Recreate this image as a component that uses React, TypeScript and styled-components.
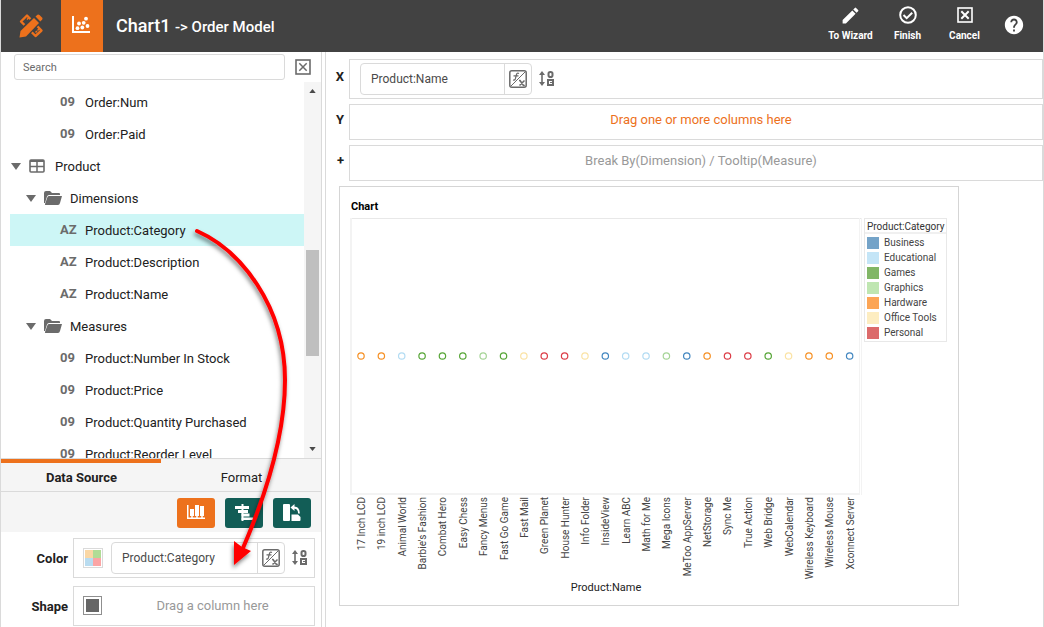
import React from "react";
import styled, { createGlobalStyle } from "styled-components";
import { MdEdit, MdHelp } from "react-icons/md";

const ORANGE = "#ed711c";
const TEAL = "#125d56";
const LINE = "#dadada";
const ICON = "#6b6b6b";

const GlobalStyle = createGlobalStyle`
  * { box-sizing: border-box; }
  body {
    margin: 0;
    background: #fff;
    color: #212121;
    font: 13px/16px Roboto, "Liberation Sans", sans-serif;
  }
  button, input { font: inherit; color: inherit; }
  button { padding: 0; border: 0; background: none; cursor: pointer; }
  svg { display: block; flex: none; }
`;

const Shell = styled.div`
  position: relative;
  display: flex;
  flex-direction: column;
  height: 100vh;
  border: solid ${LINE};
  border-width: 0 1px;
  overflow: hidden;
`;

/* ---------- header ---------- */

const Header = styled.header`
  display: flex;
  align-items: center;
  flex: none;
  height: 52px;
  background: #424242;
  color: #fff;
`;

const Logo = styled.a`
  display: flex;
  align-items: center;
  justify-content: center;
  width: 60px;
  height: 100%;
  color: ${ORANGE};
`;

const ChartTab = styled.button`
  display: flex;
  align-items: center;
  justify-content: center;
  width: 42px;
  height: 100%;
  background: ${ORANGE};
`;

const Title = styled.h1`
  flex: 1;
  margin: 0 0 0 13px;
  font-size: 18px;
  line-height: 24px;
  font-weight: 500;
  white-space: nowrap;
`;

const TitleModel = styled.span`
  font-size: 15px;
`;

const HeaderActions = styled.nav`
  display: flex;
  align-items: center;
  padding: 0 18px 3px 0;
`;

const HeaderAction = styled.button`
  display: flex;
  flex-direction: column;
  align-items: center;
  gap: 5px;
  width: 57px;
  font-size: 10px;
  line-height: 14px;
  font-weight: 700;
  white-space: nowrap;
`;

const HeaderGlyph = styled.span`
  display: flex;
  align-items: center;
  height: 18px;
`;

const HelpButton = styled.button`
  margin-left: 10px;
`;

/* ---------- left pane ---------- */

const Body = styled.div`
  display: flex;
  flex: 1;
  min-height: 0;
  gap: 3px;
`;

const Sidebar = styled.aside`
  display: flex;
  flex-direction: column;
  flex: none;
  width: 321px;
  border-right: 1px solid ${LINE};
`;

const SearchBar = styled.div`
  display: flex;
  align-items: center;
  gap: 10px;
  height: 30px;
  padding: 0 10px 0 13px;
`;

const SearchInput = styled.input`
  flex: 1;
  min-width: 0;
  height: 26px;
  padding: 0 8px;
  border: 1px solid ${LINE};
  border-radius: 3px;
  font-size: 11px;
  outline: 0;
  &::placeholder { color: #6b6b6b; opacity: 1; }
`;

const TreeArea = styled.div`
  display: flex;
  flex: 1;
  min-height: 0;
`;

const Tree = styled.ul`
  flex: 1;
  margin: 0;
  padding: 4px 0 0 9px;
  list-style: none;
  overflow: hidden;
`;

const TreeRow = styled.li<{ $depth: number; $selected?: boolean }>`
  display: flex;
  align-items: center;
  height: 32px;
  padding-left: ${(p) => 1 + p.$depth * 15}px;
  background: ${(p) => (p.$selected ? "#cdf6f6" : "transparent")};
  white-space: nowrap;
`;

const Toggle = styled.button`
  width: 10px;
  margin-right: 8px;
`;

const NodeIcon = styled.span`
  width: 26px;
`;

const TypeMark = styled.span`
  width: 25px;
  margin-left: 19px;
  color: ${ICON};
  font: bold 13px/16px "Liberation Sans Narrow", Roboto, sans-serif;
`;

const NodeText = styled.span`
  padding-top: 1px;
`;

const Scrollbar = styled.div`
  display: flex;
  flex-direction: column;
  align-items: center;
  width: 17px;
  padding: 7px 0;
  background: #f5f5f5;
`;

const ScrollTrack = styled.div`
  display: flex;
  flex-direction: column;
  flex: 1;
  margin: 4px 0;
`;

const ScrollSpace = styled.div<{ $grow: number }>`
  flex: ${(p) => p.$grow} 0 0;
`;

const ScrollThumb = styled.div`
  flex: 106 0 0;
  width: 13px;
  background: #bfbfbf;
`;

const Tabs = styled.div`
  display: flex;
  flex: none;
  border: solid ${LINE};
  border-width: 1px 0;
  background: #f5f5f5;
`;

const Tab = styled.button<{ $active?: boolean }>`
  flex: 1;
  height: 32px;
  padding: 2px 0 0 1px;
  border-top: 4px solid ${(p) => (p.$active ? ORANGE : "transparent")};
  font-weight: ${(p) => (p.$active ? 700 : 400)};
`;

const Tools = styled.div`
  display: flex;
  flex: none;
  justify-content: flex-end;
  gap: 10px;
  padding: 6px 10px 4px;
  background: #f5f5f5;
`;

const ToolButton = styled.button<{ $active?: boolean }>`
  display: flex;
  align-items: center;
  justify-content: center;
  width: 38px;
  height: 30px;
  border-radius: 3px;
  background: ${(p) => (p.$active ? ORANGE : TEAL)};
`;

const Bindings = styled.div`
  display: grid;
  flex: none;
  grid-template-columns: 67px 1fr;
  column-gap: 5px;
  row-gap: 8px;
  padding: 6px 6px 1px 0;
`;

const BindingLabel = styled.span`
  align-self: center;
  padding-top: 2px;
  text-align: right;
  font-weight: 700;
`;

const BindingBox = styled.div`
  display: flex;
  align-items: center;
  height: 40px;
  padding-left: 9px;
  border: 1px solid ${LINE};
`;

const Hint = styled.span<{ $accent?: boolean }>`
  flex: 1;
  text-align: center;
  color: ${(p) => (p.$accent ? ORANGE : "#999")};
`;

const Field = styled.div<{ $width: number }>`
  display: flex;
  width: ${(p) => p.$width}px;
  height: 32px;
  border: 1px solid ${LINE};
  border-radius: 4px;
`;

const FieldName = styled.span`
  flex: 1;
  padding: 7px 0 7px 10px;
  color: #4a4a4a;
  font-size: 12px;
`;

const FieldEdit = styled.button`
  display: flex;
  align-items: center;
  justify-content: center;
  width: 27px;
  border-left: 1px solid ${LINE};
`;

const SwatchButton = styled.button`
  margin-right: 8px;
`;

const SortButton = styled.button`
  margin-left: 7px;
`;

/* ---------- right pane ---------- */

const Main = styled.main`
  flex: 1;
  min-width: 0;
  padding-top: 7px;
  border-left: 1px solid ${LINE};
`;

const Shelf = styled.div`
  display: flex;
  align-items: center;
  margin-bottom: 5px;
`;

const ShelfLabel = styled.span`
  width: 23px;
  padding: 0 5px 4px 0;
  text-align: right;
  font-weight: 700;
`;

const ShelfBox = styled.div<{ $tall?: boolean }>`
  display: flex;
  align-items: center;
  flex: 1;
  height: ${(p) => (p.$tall ? 40 : 36)}px;
  padding: ${(p) => (p.$tall ? "0 10px" : "0 0 4px 10px")};
  border: 1px solid ${LINE};
`;

const ChartCard = styled.section`
  width: 620px;
  max-width: 100%;
  height: 420px;
  margin-left: 13px;
  padding: 12px 10px 0;
  border: 1px solid #d5d5d5;
`;

const ChartTitle = styled.h2`
  margin: 0 0 3px 1px;
  color: #000;
  font-size: 11px;
  line-height: 16px;
  font-weight: 700;
`;

const ChartContent = styled.div`
  display: flex;
  align-items: flex-start;
`;

const Legend = styled.div`
  width: 83px;
  border: 1px solid #e8e8e8;
  color: #444;
  font-size: 10px;
  line-height: 15px;
`;

const LegendTitle = styled.div`
  height: 15px;
  padding-left: 2px;
  border-bottom: 2px solid #f0f0f0;
  color: #333;
  white-space: nowrap;
`;

const LegendList = styled.ul`
  margin: 0;
  padding: 1px 0 1px 2px;
  list-style: none;
`;

const LegendItem = styled.li`
  display: flex;
  align-items: center;
  gap: 5px;
`;

const LegendSwatch = styled.span<{ $color: string }>`
  width: 12px;
  height: 12px;
  background: ${(p) => p.$color};
`;

const Annotation = styled.svg`
  position: absolute;
  top: 0;
  left: -1px;
  pointer-events: none;
`;

/* ---------- icons ---------- */

const LogoIcon = () => (
  <svg width="26" height="26" viewBox="0 0 26 26" fill="none" stroke="currentColor">
    <path d="M9 2.500 23.500 17.500 17.500 23 3 8.500z" strokeWidth="2.400" strokeLinejoin="round" />
    <path d="m11 4.500-2 2M21.500 15.500l-2 2M19 18l-1.500 1.500" strokeWidth="1.500" />
    <path d="M1.500 24.500 3 17 17 3.500l5.500 5L8.500 23z" fill="#424242" stroke="#424242" strokeWidth="2.500" />
    <path d="M1.500 24.500 2.500 18 16 5l5 5L8 23.500z" fill="currentColor" stroke="none" />
    <path d="m17.500 3.500 2-1.700q1-.6 2 .3l2.500 2.500q1 1 .2 2l-1.900 1.900z" fill="currentColor" stroke="none" />
  </svg>
);

const ScatterIcon = () => (
  <svg width="20" height="20" viewBox="0 0 20 20" fill="#fff">
    <path d="M0 0h2v15h16v2H0z" />
    <circle cx="5.500" cy="12.200" r="1.900" />
    <circle cx="7" cy="7.500" r="1.900" />
    <circle cx="10.300" cy="11.500" r="1.900" />
    <circle cx="11.700" cy="6.800" r="1.900" />
    <circle cx="14" cy="2.700" r="1.900" />
    <circle cx="15.500" cy="10" r="1.900" />
  </svg>
);

const CheckIcon = () => (
  <svg width="18" height="18" viewBox="0 0 18 18" fill="none" stroke="#fff" strokeWidth="2">
    <circle cx="9" cy="9" r="7.800" />
    <path d="m4.500 9 3.200 3.200 5.500-5.500" />
  </svg>
);

const BoxedCross = ({ color, weight }: { color: string; weight: number }) => (
  <svg width="16" height="16" viewBox="0 0 16 16" fill="none" stroke={color}>
    <rect x="1" y="1" width="14" height="14" strokeWidth="1.600" />
    <path d="m4.300 4.300 7.400 7.400M11.700 4.300l-7.400 7.400" strokeWidth={weight} />
  </svg>
);

const Caret = () => (
  <svg width="10" height="7" viewBox="0 0 10 7" fill={ICON}>
    <path d="M0 0h10L5 7z" />
  </svg>
);

const TableIcon = () => (
  <svg width="16" height="14" viewBox="0 0 16 14" fill="none" stroke={ICON}>
    <rect x="1" y="1" width="14" height="12" rx="1" strokeWidth="1.600" />
    <path d="M1 2h14" strokeWidth="2" />
    <path d="M8 2v11M1 7.500h14" strokeWidth="1.500" />
  </svg>
);

const FolderIcon = () => (
  <svg width="18" height="14" viewBox="0 0 18 14" fill={ICON}>
    <path d="M0 12V2Q0 0 2 0h4l2 2h7q1 0 1 1v1H5Q3.500 4 3 5.500L1 12z" />
    <path d="M5 5h13l-2 7q-.5 2-2 2H1.500q-.8 0-.5-1L3.500 6Q4 5 5 5z" />
  </svg>
);

const FormulaIcon = () => (
  <svg width="18" height="18" viewBox="0 0 18 18" fill="none" stroke={ICON}>
    <rect x=".8" y=".8" width="16.400" height="16.400" rx="2" strokeWidth="1.500" />
    <path d="M2 16 16 2" />
    <path d="M10 3.500q-2-1-2.500 1L6.300 9q-.5 1.500-2.300 1M4.500 5.800h5" strokeWidth="1.200" />
    <path d="m11 10.500 3.500 5M15.500 10.500l-5 5M10 10.500h1.500M14 15.500h1.800" strokeWidth="1.500" />
  </svg>
);

const SortIcon = () => (
  <svg width="15" height="16" viewBox="0 0 15 16" fill="none" stroke={ICON}>
    <path d="M3 3v9" strokeWidth="1.600" />
    <path d="M0 4 3 0l3 4zM0 11l3 4 3-4z" fill={ICON} stroke="none" />
    <rect x="9.500" y="1" width="4" height="5" rx="1.800" strokeWidth="2" />
    <rect x="9" y="9" width="5" height="5" strokeWidth="2" />
    <path d="M11 11.500h3" />
  </svg>
);

const BarsIcon = () => (
  <svg width="20" height="18" viewBox="0 0 20 18" fill="#fff">
    <path d="M1 1h1.500v12.500H19V15H1z" />
    <rect x="4" y="5" width="4" height="7" />
    <rect x="9" y="1" width="4" height="11" />
    <rect x="14" y="2" width="4" height="10" />
    <path d="M6 12v3M11 12v3M16 12v3" stroke="#fff" strokeWidth="1.500" />
  </svg>
);

const AlignIcon = () => (
  <svg width="20" height="18" viewBox="0 0 20 18" fill="#fff">
    <path d="M7.500 0h2v17h-2z" />
    <path d="M1 2h14v3H1zM4 6h10v3H4zM7.500 9.500h8v3h-8zM7.500 13.500H19v2.500H7.500z" />
  </svg>
);

const SwapIcon = () => (
  <svg width="20" height="18" viewBox="0 0 20 18" fill="#fff">
    <rect x="1" y="0" width="7" height="17" rx="1" />
    <path d="M9.500 10.500H16l2.500 2.500v3q0 1-1 1h-8z" />
    <path d="M8.500 3.500 12.500 0v7z" />
    <path d="M11.500 3.500q5.500 0 5.500 6" fill="none" stroke="#fff" strokeWidth="1.800" />
  </svg>
);

const PaletteIcon = () => (
  <svg width="20" height="20" viewBox="0 0 20 20">
    <rect x=".5" y=".5" width="19" height="19" fill="#fff" stroke={LINE} />
    <path d="M2 2h8v8H2z" fill="#fad7a5" />
    <path d="M10 2h8v8h-8z" fill="#b0dc96" />
    <path d="M2 10h8v8H2z" fill="#b9dcf0" />
    <path d="M10 10h8v8h-8z" fill="#fba5a5" />
  </svg>
);

const ShapeIcon = () => (
  <svg width="20" height="20" viewBox="0 0 20 20">
    <rect x=".5" y=".5" width="18" height="18" fill="#fff" stroke="#8f8f8f" />
    <path d="M3 3h13v13H3z" fill="#666" />
  </svg>
);

/* ---------- data ---------- */

type Node = { text: string; kind: "09" | "AZ" | "table" | "folder"; selected?: boolean };

const NODES: Node[] = [
  { text: "Order:Num", kind: "09" },
  { text: "Order:Paid", kind: "09" },
  { text: "Product", kind: "table" },
  { text: "Dimensions", kind: "folder" },
  { text: "Product:Category", kind: "AZ", selected: true },
  { text: "Product:Description", kind: "AZ" },
  { text: "Product:Name", kind: "AZ" },
  { text: "Measures", kind: "folder" },
  { text: "Product:Number In Stock", kind: "09" },
  { text: "Product:Price", kind: "09" },
  { text: "Product:Quantity Purchased", kind: "09" },
  { text: "Product:Reorder Level", kind: "09" },
];

const DEPTH = { table: 0, folder: 1, "09": 2, AZ: 2 };

const CATEGORIES = {
  Business: ["#74a3c8", "#4186c0"],
  Educational: ["#c4e5f7", "#b3dcf3"],
  Games: ["#81b666", "#56a536"],
  Graphics: ["#bfe6b1", "#a5d496"],
  Hardware: ["#fca555", "#f68f22"],
  "Office Tools": ["#fdedc1", "#fbe3a5"],
  Personal: ["#dc6a6a", "#dc3c46"],
};

type Category = keyof typeof CATEGORIES;

const PRODUCTS: [string, Category][] = [
  ["17 Inch LCD", "Hardware"],
  ["19 inch LCD", "Hardware"],
  ["Animal World", "Educational"],
  ["Barbie's Fashion", "Games"],
  ["Combat Hero", "Games"],
  ["Easy Chess", "Games"],
  ["Fancy Menus", "Graphics"],
  ["Fast Go Game", "Games"],
  ["Fast Mail", "Office Tools"],
  ["Green Planet", "Personal"],
  ["House Hunter", "Personal"],
  ["Info Folder", "Office Tools"],
  ["InsideView", "Business"],
  ["Learn ABC", "Educational"],
  ["Math for Me", "Educational"],
  ["Mega Icons", "Graphics"],
  ["MeToo AppServer", "Business"],
  ["NetStorage", "Hardware"],
  ["Sync Me", "Personal"],
  ["True Action", "Personal"],
  ["Web Bridge", "Games"],
  ["WebCalendar", "Office Tools"],
  ["Wireless Keyboard", "Hardware"],
  ["Wireless Mouse", "Hardware"],
  ["Xconnect Server", "Business"],
];

/* ---------- parts ---------- */

const TreeItem = ({ node }: { node: Node }) => {
  const leaf = node.kind === "09" || node.kind === "AZ";
  return (
    <TreeRow $depth={DEPTH[node.kind]} $selected={node.selected}>
      {leaf ? (
        <TypeMark>{node.kind}</TypeMark>
      ) : (
        <>
          <Toggle aria-label={`Collapse ${node.text}`}>
            <Caret />
          </Toggle>
          <NodeIcon>{node.kind === "table" ? <TableIcon /> : <FolderIcon />}</NodeIcon>
        </>
      )}
      <NodeText>{node.text}</NodeText>
    </TreeRow>
  );
};

const BoundField = ({ name, width }: { name: string; width: number }) => (
  <>
    <Field $width={width}>
      <FieldName>{name}</FieldName>
      <FieldEdit aria-label={`Edit ${name}`}>
        <FormulaIcon />
      </FieldEdit>
    </Field>
    <SortButton aria-label={`Sort ${name}`}>
      <SortIcon />
    </SortButton>
  </>
);

const PlotArea = () => {
  const step = 509 / PRODUCTS.length;
  return (
    <svg
      width="514"
      height="380"
      viewBox="0 0 514 380"
      fontFamily="Roboto, sans-serif"
      fontSize="10"
    >
      <path d="M0 .5h511" stroke="#e8e8e8" />
      <path d="M1 0v277M0 276h510" stroke="#f3f3f3" strokeWidth="2" fill="none" />
      <path d="M509.500 0v277M511.500 0v277" stroke="#f3f3f3" />
      {PRODUCTS.map(([name, category], i) => {
        const x = 11 + i * step;
        return (
          <g key={name}>
            <circle
              cx={x}
              cy="138"
              r="3.200"
              fill="none"
              stroke={CATEGORIES[category][1]}
              strokeWidth="1.200"
            />
            <text
              transform={`translate(${Math.round(x) + 4} 279) rotate(-90)`}
              textAnchor="end"
              fill="#444"
            >
              {name}
            </text>
          </g>
        );
      })}
      <text x="256" y="373" textAnchor="middle" fontSize="11" fill="#222">
        Product:Name
      </text>
    </svg>
  );
};

const DragArrow = () => (
  <Annotation width="330" height="600" viewBox="0 0 330 600" aria-hidden="true">
    <defs>
      <filter id="arrow-shadow" x="-20%" y="-20%" width="140%" height="140%">
        <feDropShadow dx="-1" dy="3" stdDeviation="2" floodColor="#000" floodOpacity="0.5" />
      </filter>
    </defs>
    <g filter="url(#arrow-shadow)">
      <path
        d="M197 231C240 250 285 305 285 380C285 430 268 490 243 548"
        fill="none"
        stroke="#f00"
        strokeWidth="4"
        strokeLinecap="round"
      />
      <path d="M234 565V541l8 6 9 4z" fill="#f00" />
    </g>
  </Annotation>
);

export default function App() {
  return (
    <>
      <GlobalStyle />
      <Shell>
        <Header>
          <Logo href="#" aria-label="Home">
            <LogoIcon />
          </Logo>
          <ChartTab aria-label="Chart editor">
            <ScatterIcon />
          </ChartTab>
          <Title>
            Chart1 <TitleModel>-&gt; Order Model</TitleModel>
          </Title>
          <HeaderActions>
            <HeaderAction>
              <HeaderGlyph>
                <MdEdit size={21} />
              </HeaderGlyph>
              To Wizard
            </HeaderAction>
            <HeaderAction>
              <HeaderGlyph>
                <CheckIcon />
              </HeaderGlyph>
              Finish
            </HeaderAction>
            <HeaderAction>
              <HeaderGlyph>
                <BoxedCross color="#fff" weight={2} />
              </HeaderGlyph>
              Cancel
            </HeaderAction>
            <HelpButton aria-label="Help">
              <MdHelp size={22} />
            </HelpButton>
          </HeaderActions>
        </Header>

        <Body>
          <Sidebar>
            <SearchBar>
              <SearchInput type="search" placeholder="Search" aria-label="Search" />
              <button aria-label="Clear search">
                <BoxedCross color={ICON} weight={1.5} />
              </button>
            </SearchBar>
            <TreeArea>
              <Tree>
                {NODES.map((node) => (
                  <TreeItem key={node.text} node={node} />
                ))}
              </Tree>
              <Scrollbar>
                <svg width="7" height="4" viewBox="0 0 8 5" fill="#4a4a4a">
                  <path d="M0 5h8L4 0z" />
                </svg>
                <ScrollTrack>
                  <ScrollSpace $grow={153} />
                  <ScrollThumb />
                  <ScrollSpace $grow={87} />
                </ScrollTrack>
                <svg width="7" height="4" viewBox="0 0 8 5" fill="#4a4a4a">
                  <path d="M0 0h8L4 5z" />
                </svg>
              </Scrollbar>
            </TreeArea>
            <Tabs role="tablist">
              <Tab role="tab" aria-selected="true" $active>
                Data Source
              </Tab>
              <Tab role="tab" aria-selected="false">
                Format
              </Tab>
            </Tabs>
            <Tools>
              <ToolButton aria-label="Chart type" $active>
                <BarsIcon />
              </ToolButton>
              <ToolButton aria-label="Chart style">
                <AlignIcon />
              </ToolButton>
              <ToolButton aria-label="Swap axes">
                <SwapIcon />
              </ToolButton>
            </Tools>
            <Bindings>
              <BindingLabel>Color</BindingLabel>
              <BindingBox>
                <SwatchButton aria-label="Choose colors">
                  <PaletteIcon />
                </SwatchButton>
                <BoundField name="Product:Category" width={174} />
              </BindingBox>
              <BindingLabel>Shape</BindingLabel>
              <BindingBox>
                <SwatchButton aria-label="Choose shape">
                  <ShapeIcon />
                </SwatchButton>
                <Hint>Drag a column here</Hint>
              </BindingBox>
            </Bindings>
          </Sidebar>

          <Main>
            <Shelf>
              <ShelfLabel>X</ShelfLabel>
              <ShelfBox $tall>
                <BoundField name="Product:Name" width={172} />
              </ShelfBox>
            </Shelf>
            <Shelf>
              <ShelfLabel>Y</ShelfLabel>
              <ShelfBox>
                <Hint $accent>Drag one or more columns here</Hint>
              </ShelfBox>
            </Shelf>
            <Shelf>
              <ShelfLabel>+</ShelfLabel>
              <ShelfBox>
                <Hint>Break By(Dimension) / Tooltip(Measure)</Hint>
              </ShelfBox>
            </Shelf>
            <ChartCard>
              <ChartTitle>Chart</ChartTitle>
              <ChartContent>
                <PlotArea />
                <Legend>
                  <LegendTitle>Product:Category</LegendTitle>
                  <LegendList>
                    {Object.entries(CATEGORIES).map(([name, [fill]]) => (
                      <LegendItem key={name}>
                        <LegendSwatch $color={fill} />
                        {name}
                      </LegendItem>
                    ))}
                  </LegendList>
                </Legend>
              </ChartContent>
            </ChartCard>
          </Main>
        </Body>
        <DragArrow />
      </Shell>
    </>
  );
}
